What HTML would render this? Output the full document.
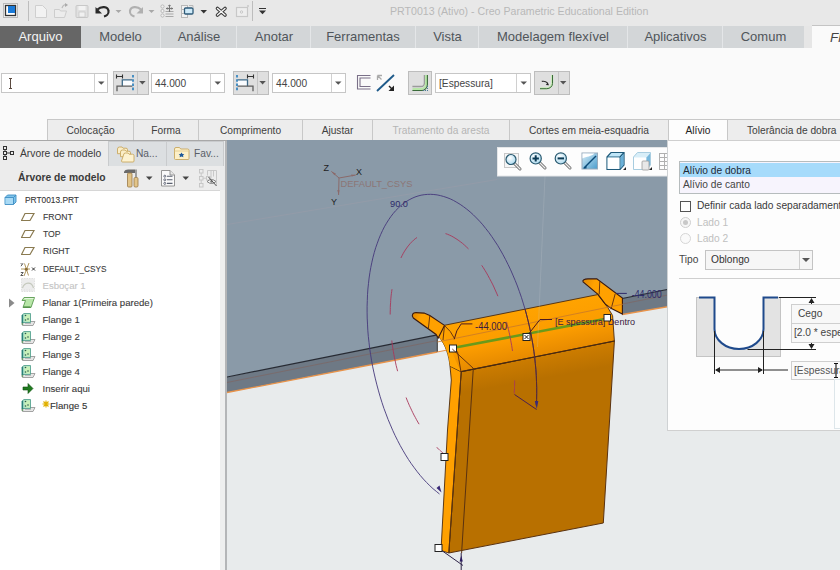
<!DOCTYPE html>
<html><head><meta charset="utf-8">
<style>
*{margin:0;padding:0;box-sizing:border-box}
html,body{width:840px;height:570px;overflow:hidden;background:#e8ebec;font-family:"Liberation Sans",sans-serif;color:#3c3c3c}
.a{position:absolute}
#title{left:0;top:0;width:840px;height:26px;background:#e8e8e8}
#tabs{left:0;top:26px;width:840px;height:22px;background:#d3d6d8}
.tab{position:absolute;top:0;height:22px;font-size:13px;line-height:22px;text-align:center;color:#50555a;border-left:1px solid #e4e6e8}
#ribbon{left:0;top:48px;width:840px;height:92px;background:#fafafa}
.combo{position:absolute;height:19px;background:#fff;border:1px solid #c6c6c6;font-size:10.2px;line-height:20px;padding-left:3px;color:#444}
.combo .dd{position:absolute;right:0;top:0;width:13px;height:17px;border-left:1px solid #d0d0d0}
.tri{position:absolute;width:0;height:0;border-left:4px solid transparent;border-right:4px solid transparent;border-top:4px solid #555}
.btn{position:absolute;height:23px;background:#dfdfdf;border:1px solid #bdbdbd}
.btn .dv{position:absolute;top:0;height:21px;border-left:1px solid #c4c4c4}
.stab{position:absolute;top:119px;height:21px;background:#ededed;border:1px solid #c8c8c8;border-bottom:none;font-size:10.2px;line-height:21.5px;text-align:center;color:#404040}
#left{left:0;top:140px;width:226px;height:430px;background:#e6e8e9}
.ti{position:absolute;font-size:9.6px;line-height:12px;color:#333;white-space:nowrap;-webkit-text-stroke:.1px currentColor}
#vp{left:227px;top:140px;width:613px;height:430px;background:#e8ebec;overflow:hidden}
#panel{left:668px;top:140px;width:172px;height:291px;background:#fdfdfd;border-left:1px solid #d4d4d4;border-bottom:1px solid #cfcfcf}
.pt{position:absolute;font-size:10.2px;line-height:12px;white-space:nowrap;color:#3a3a3a}
</style></head><body>
<!-- title bar -->
<div id="title" class="a">
<svg class="a" style="left:0;top:0" width="280" height="26" viewBox="0 0 280 26">
  <rect x="3.5" y="3.5" width="14" height="14" fill="#f4f4f4" stroke="#bbb"/>
  <rect x="5.5" y="5.5" width="10" height="10" fill="#fff" stroke="#333" stroke-width="1.3"/>
  <rect x="8" y="6" width="7" height="7" fill="#1a7ad8"/>
  <line x1="28.5" y1="1" x2="28.5" y2="21" stroke="#bdbdbd"/>
  <path d="M35.5 5.5h7l4 4v8h-11z" fill="#f2f2f2" stroke="#cfcfcf"/>
  <path d="M54.5 9.5h5l1 1.5h6l-2 6.5h-10z" fill="#ececec" stroke="#cdcdcd"/><path d="M62 8c1-3 3-4 5-3" stroke="#bbb" fill="none" stroke-width="1.2"/><path d="M65 3l3 2-3 2z" fill="#aaa"/>
  <rect x="76" y="5.5" width="12" height="12" rx="1" fill="#e0e0e0" stroke="#c8c8c8"/><rect x="78.5" y="6" width="7" height="4" fill="#f2f2f2"/><rect x="79" y="12" width="6" height="5" fill="#f0f0f0" stroke="#c0c0c0" stroke-width=".6"/>
  <path d="M97.5 9.5 C101 6 108 6 108.5 11 C109 14 106 16 104 16.5" stroke="#2a2a2a" stroke-width="2.2" fill="none"/><path d="M95.5 7v6.5h6.5z" fill="#2a2a2a"/>
  <path d="M115.5 10h6l-3 3z" fill="#a8a8a8"/>
  <path d="M141 9.5 C137.5 6 130.5 6 130 11 C129.5 14 132.5 16 134.5 16.5" stroke="#b0b0b0" stroke-width="2.2" fill="none"/><path d="M143 7v6.5h-6.5z" fill="#b0b0b0"/>
  <path d="M148.5 10h6l-3 3z" fill="#a8a8a8"/>
  <g fill="#f0f0f0" stroke="#b4b4b4" stroke-width=".9"><circle cx="162.5" cy="6.5" r="1.6"/><circle cx="162.5" cy="11" r="1.6"/><circle cx="162.5" cy="15.5" r="1.6"/></g>
  <path d="M165.5 11.5h8M165.5 14h8M165.5 16.5h8" stroke="#a8a8a8" stroke-width="1.1"/>
  <path d="M166 8.5h7M169.5 5v7" stroke="#777" stroke-width="1.2"/><path d="M166 8.5l1.6-1.6v3.2zM173 8.5l-1.6-1.6v3.2zM169.5 4.5l-1.6 1.6h3.2z" fill="#777"/>
  <rect x="181.5" y="5.5" width="6" height="4" fill="#f2f2f2" stroke="#b8b8b8"/><rect x="181.5" y="9.5" width="5" height="4" fill="#f2f2f2" stroke="#b8b8b8"/><rect x="181.5" y="13.5" width="6" height="4" fill="#f2f2f2" stroke="#b8b8b8"/>
  <rect x="184.5" y="8" width="8.5" height="6" rx="1" fill="#cfeaf8" stroke="#2e5a78" stroke-width="1.3"/>
  <path d="M189 5.5h4v2.5" fill="none" stroke="#b8b8b8"/>
  <path d="M200.5 10h6.5l-3.25 3.5z" fill="#333"/>
  <path d="M217.5 8.5l7.5 6.5M225 8.5l-7.5 6.5" stroke="#3a3a3a" stroke-width="3.6" stroke-linecap="round"/><path d="M217.5 8.5l7.5 6.5M225 8.5l-7.5 6.5" stroke="#f8f8f8" stroke-width="1.4" stroke-linecap="round"/>
  <rect x="236.5" y="7.5" width="11" height="9" fill="#eee" stroke="#c8c8c8" stroke-width="1.2"/><circle cx="241.5" cy="12" r="1.2" fill="none" stroke="#c8c8c8"/><circle cx="248" cy="6" r="1" fill="#c8c8c8"/>
  <line x1="252.5" y1="1" x2="252.5" y2="21" stroke="#bdbdbd"/>
  <path d="M259 8.5h7" stroke="#333" stroke-width="1"/><path d="M259 10.5h7l-3.5 3.8z" fill="#333"/>
</svg>
<div class="a" style="left:390px;top:5px;font-size:10.6px;line-height:13px;color:#b8b8b8;white-space:nowrap">PRT0013 (Ativo) - Creo Parametric Educational Edition</div>

</div>
<!-- tabs -->
<div id="tabs" class="a">
  <div class="tab" style="left:0;width:81px;background:#666;color:#f4f4f4;border:none">Arquivo</div>
  <div class="tab" style="left:81px;width:79px;border:none">Modelo</div>
  <div class="tab" style="left:160px;width:77px">Análise</div>
  <div class="tab" style="left:236px;width:75px">Anotar</div>
  <div class="tab" style="left:310px;width:105px">Ferramentas</div>
  <div class="tab" style="left:415px;width:64px">Vista</div>
  <div class="tab" style="left:478px;width:149px">Modelagem flexível</div>
  <div class="tab" style="left:627px;width:96px">Aplicativos</div>
  <div class="tab" style="left:722px;width:82px">Comum</div>
  <div class="a" style="left:804px;top:0;width:8px;height:22px;background:#e6e6e6"></div>
  <div class="a" style="left:812px;top:-1px;width:40px;height:24px;background:#fafafa;border-top:1px solid #c4c4c4;font-size:13.5px;font-style:italic;line-height:23px;padding-left:18px;color:#444;overflow:hidden;white-space:nowrap">Fla</div>
</div>
<!-- ribbon -->
<div id="ribbon" class="a"></div>
<!-- ribbon controls -->
<div class="combo" style="left:1px;top:73px;width:107px;height:20px"><div class="dd" style="width:13px;height:18px"></div></div>
<div class="btn" style="left:113px;top:71px;width:36px;height:24px"><div class="dv" style="left:23px;height:22px"></div></div>
<div class="combo" style="left:151px;top:73px;width:74px;height:20px">44.000<div class="dd" style="width:14px;height:18px"></div></div>
<div class="btn" style="left:233px;top:71px;width:36px;height:24px"><div class="dv" style="left:23px;height:22px"></div></div>
<div class="combo" style="left:272px;top:73px;width:74px;height:20px">44.000<div class="dd" style="width:14px;height:18px"></div></div>
<div class="btn" style="left:408px;top:71px;width:24px;height:24px"></div>
<div class="combo" style="left:435px;top:73px;width:96px;height:20px">[Espessura]<div class="dd" style="width:14px;height:18px"></div></div>
<div class="btn" style="left:534px;top:71px;width:36px;height:24px"><div class="dv" style="left:23px;height:22px"></div></div>
<svg class="a" style="left:0;top:60px" width="600" height="40" viewBox="0 60 600 40">
  <g fill="#555"><path d="M98 81.5h6.5l-3.25 3.3z"/><path d="M139.2 81h6.4l-3.2 3.6z"/><path d="M214.5 81.5h6.5l-3.25 3.3z"/><path d="M259.4 81h6.4l-3.2 3.6z"/><path d="M335 81.5h6.5l-3.25 3.3z"/><path d="M520.5 81.5h6.5l-3.25 3.3z"/><path d="M560 81h6.4l-3.2 3.6z"/></g>
  <path d="M9 78.5h3M9 88.5h3M10.5 78.5v10" stroke="#5a4a40" stroke-width="1"/>
  <!-- btn1 icon -->
  <path d="M116.5 74.5v4M122.5 74.5v4M117 76.5h5" stroke="#333" stroke-width="1.1" fill="none"/>
  <rect x="122.3" y="79.8" width="10" height="6.4" fill="#fafcff"/>
  <path d="M132.3 79.8h-10v6.4" stroke="#3e6a88" stroke-width="1.3" fill="none"/>
  <path d="M117 91.3v-5.1h15.3" stroke="#5e5e5e" stroke-width="1.3" fill="none"/>
  <path d="M133 75v16" stroke="#3a88c0" stroke-width="1.8" stroke-dasharray="2.6 1.6" fill="none"/>
  <!-- btn2 icon -->
  <path d="M247.5 74.5v4M253.5 74.5v4M248 76.5h5" stroke="#333" stroke-width="1.1" fill="none"/>
  <rect x="237.5" y="79.8" width="10" height="6.4" fill="#fafcff"/>
  <path d="M237.5 79.8h10v6.4" stroke="#3e6a88" stroke-width="1.3" fill="none"/>
  <path d="M253 91.3v-5.1h-15.5" stroke="#5e5e5e" stroke-width="1.3" fill="none"/>
  <path d="M237 75v16" stroke="#3a88c0" stroke-width="1.8" stroke-dasharray="2.6 1.6" fill="none"/>
  <!-- cut icon -->
  <path d="M370.5 75.5h-13v13.5h13M370.5 78h-10.5v8.5h10.5" stroke="#7a7088" stroke-width="1.1" fill="none"/>
  <path d="M377 91l17-16" stroke="#1e5a8a" stroke-width="1.8"/>
  <path d="M377.5 75.5v4.5M377.5 75.5h4.5M377.5 75.5l4 4" stroke="#aaa" stroke-width="1.3" fill="none"/>
  <path d="M394 91h-5.5l5.5-5.5z" fill="#222"/><path d="M393 90l-4-4" stroke="#222" stroke-width="1.4"/>
  <!-- btn3 icon -->
  <path d="M424.4 75v8c0 2-1.5 3.5-3.5 3.5h-8.5" stroke="#9a9a9a" stroke-width="1.3" fill="none"/>
  <path d="M426 75v9c0 3-2.5 5-5 5h-8.5" stroke="#b8e6a8" stroke-width="2" fill="none"/>
  <path d="M427.4 75v9.5c0 3.5-3 6-6 6h-9" stroke="#3a6a3a" stroke-width="1.1" fill="none"/>
  <path d="M427.5 86v5M423 90.5h4.5" stroke="#4a7a9a" stroke-width="1" stroke-dasharray="1 1"/>
  <!-- btn4 icon -->
  <path d="M552.2 75v8c0 3-2.5 5.3-5.5 5.3h-6.6" stroke="#c8ecb8" stroke-width="2.2" fill="none"/>
  <path d="M552.5 75v8.5c0 3-2.7 5.2-5.7 5.2h-6.8" stroke="#3a6a3a" stroke-width="1" fill="none"/>
  <path d="M541.8 81.4c2.5-.5 4.5.3 6 2" stroke="#333" stroke-width="1.2" fill="none"/>
  <path d="M549 85.2l-3.2-.3 2-2.4z" fill="#222"/>
</svg>

<!-- sub tabs -->
<div class="stab" style="left:47px;width:87px">Colocação</div>
<div class="stab" style="left:133px;width:66px">Forma</div>
<div class="stab" style="left:198px;width:105px">Comprimento</div>
<div class="stab" style="left:302px;width:71px">Ajustar</div>
<div class="stab" style="left:372px;width:138px;color:#b5b5b5">Tratamento da aresta</div>
<div class="stab" style="left:509px;width:160px">Cortes em meia-esquadria</div>
<div class="stab" style="left:668px;width:60px;background:#fdfdfd;color:#222">Alívio</div>
<div class="stab" style="left:727px;width:120px;text-align:left;padding-left:19px">Tolerância de dobra</div>
<!-- left panel -->
<!-- left panel -->
<div class="a" style="left:0;top:140px;width:226px;height:430px;background:#e9eaeb"></div>
<div class="a" style="left:108px;top:141px;width:59px;height:25px;background:#dcdfe1;border:1px solid #c9cbcd;border-bottom:none"></div>
<div class="a" style="left:166px;top:141px;width:58px;height:25px;background:#dcdfe1;border:1px solid #c9cbcd;border-bottom:none"></div>
<div class="a" style="left:0;top:166px;width:220px;height:24px;background:#ececec"></div>
<div class="a" style="left:0;top:140px;width:108px;height:26px;background:#ececec"></div>
<svg class="a" style="left:2px;top:145px" width="14" height="16" viewBox="0 0 14 16">
  <g fill="none" stroke="#333" stroke-width="1"><rect x="1.5" y="1.5" width="3" height="3"/><rect x="1.5" y="6.5" width="3" height="3"/><rect x="1.5" y="11.5" width="3" height="3"/><rect x="8.5" y="6.5" width="3" height="3"/><path d="M3 4.5v2M3 9.5v2M4.5 8h4"/></g>
</svg>
<div class="a" style="left:20px;top:148px;font-size:10.3px;line-height:12px;color:#3a3a3a;white-space:nowrap">Árvore de modelo</div>
<svg class="a" style="left:116px;top:145px" width="20" height="18" viewBox="0 0 20 18">
  <g stroke="#c8a860" stroke-width=".9"><path d="M1.5 4 q0-2 2-2 h2.5 l1 1.2 h3 q1.5 0 1.5 1.5 v4 h-10z" fill="#fbeec8"/><path d="M4.5 7 q0-2 2-2 h2.5 l1 1.2 h3 q1.5 0 1.5 1.5 v4 h-10z" fill="#fbeec8"/><path d="M7.5 10 q0-2 2-2 h2.5 l1 1.2 h3.5 q1.5 0 1.5 1.5 v5.3 q0 1 -1 1 h-10.5 q-1 0 -1-1z" fill="#fdf2d0"/></g>
</svg>
<div class="a" style="left:136px;top:148px;font-size:10.2px;line-height:12px;color:#5a6068;white-space:nowrap">Na...</div>
<svg class="a" style="left:173px;top:146px" width="17" height="15" viewBox="0 0 17 15">
  <path d="M1.5 3 q0-1.5 1.5-1.5 h3.5 l1.2 1.5 h6.8 q1.5 0 1.5 1.5 v8 q0 1-1 1 h-12.5 q-1 0-1-1z" fill="#fdf0c8" stroke="#c8a860" stroke-width=".9"/><path d="M1.5 5h14" stroke="#e0c888" stroke-width=".8"/><path d="M8.5 6.5l1 1.6 1.8.2-1.3 1.2.4 1.8-1.9-.9-1.9.9.4-1.8-1.3-1.2 1.8-.2z" fill="#1f5a9a"/>
</svg>
<div class="a" style="left:194px;top:148px;font-size:10.2px;line-height:12px;color:#5a6068;white-space:nowrap">Fav...</div>
<div class="a" style="left:18px;top:172px;font-size:10.3px;line-height:12px;font-weight:bold;color:#3a3a3a;white-space:nowrap">Árvore de modelo</div>
<svg class="a" style="left:115px;top:164px" width="110" height="26" viewBox="115 164 110 26">
  <path d="M124 171.5 q1-2 4-2 h7 v3.5 h-11z" fill="#6a6a6a"/>
  <rect x="127.5" y="173" width="4.5" height="14" rx="1" fill="#e2c488" stroke="#9a7a48" stroke-width=".8"/>
  <rect x="135.2" y="169.5" width="1.6" height="8.5" fill="#8a8a8a"/>
  <rect x="134" y="177.5" width="4" height="9.5" rx="1.2" fill="#e2c488" stroke="#9a7a48" stroke-width=".8"/>
  <path d="M146 176.5h6.5l-3.25 3.5z" fill="#444"/>
  <path d="M161.5 170.5h8.5l4.5 4.5v11h-13z" fill="#fafafa" stroke="#8a8a8a" stroke-width=".9"/><path d="M170 170.5v4.5h4.5" fill="#e8e8e8" stroke="#8a8a8a" stroke-width=".9"/>
  <g fill="none" stroke="#5a6070" stroke-width=".9"><circle cx="164.8" cy="176.2" r="1"/><circle cx="164.8" cy="179.8" r="1"/><circle cx="164.8" cy="183.4" r="1"/></g>
  <path d="M167 176.2h5.5M167 179.8h5.5M167 183.4h5.5" stroke="#5a6070" stroke-width="1.1"/>
  <path d="M182.5 176.5h6.5l-3.25 3.5z" fill="#444"/>
  <g fill="none" stroke="#c4c4c4" stroke-width=".9"><rect x="199.5" y="169.5" width="3.5" height="3.5"/><rect x="199.5" y="176.5" width="3.5" height="3.5"/><rect x="199.5" y="183.5" width="3.5" height="3.5"/><path d="M201.2 173v3.5M201.2 180v3.5M203 178.2h3.5"/><path d="M207.5 170.5h9v15M207.5 170.5v5M211 170.5v8M213.5 170.5v6"/></g>
  <rect x="206.5" y="176.5" width="3.5" height="3.5" fill="none" stroke="#c4c4c4" stroke-width=".9"/>
  <path d="M207 181.5q4.5-4 9 0q-4.5 4-9 0z" fill="#f4f4f4" stroke="#777" stroke-width=".9"/><circle cx="211.5" cy="181.5" r="1.2" fill="#777"/><path d="M208.5 177l8 9" stroke="#555" stroke-width="1"/>
</svg>
<div class="a" style="left:0;top:190px;width:220px;height:380px;background:#fff;border-top:1px solid #d6d6d6"></div>
<div class="a" style="left:220px;top:190px;width:5px;height:380px;background:#eeefef"></div>
<div class="a" style="left:225px;top:140px;width:2px;height:430px;background:#b4b6b8"></div>
<svg class="a" style="left:4px;top:194px" width="13" height="11" viewBox="0 0 13 11">
  <path d="M1 3.5l2.5-2.5h8.5v7l-2.5 2.5h-8.5z" fill="#7ec3ea" stroke="#3f8fc4" stroke-width=".9"/><path d="M1 3.5h8.5v7M9.5 3.5l2.5-2.5" fill="none" stroke="#3f8fc4" stroke-width=".9"/><rect x="1.5" y="4" width="7.5" height="6" fill="#a9daf5"/>
</svg>
<div class="ti" style="left:25px;top:193.5px;transform:scaleX(.87);transform-origin:0 0">PRT0013.PRT</div>
<svg class="a" style="left:21px;top:212px" width="14" height="10" viewBox="0 0 14 10"><path d="M4 1.5h9l-4 7h-8.5z" fill="none" stroke="#8a7a50" stroke-width="1.2"/></svg>
<div class="ti" style="left:42.5px;top:211px;letter-spacing:0;transform:scaleX(.9);transform-origin:0 0;color:#3a3a3a">FRONT</div>
<svg class="a" style="left:21px;top:229px" width="14" height="10" viewBox="0 0 14 10"><path d="M4 1.5h9l-4 7h-8.5z" fill="none" stroke="#8a7a50" stroke-width="1.2"/></svg>
<div class="ti" style="left:42.5px;top:228px;letter-spacing:0;transform:scaleX(.9);transform-origin:0 0;color:#3a3a3a">TOP</div>
<svg class="a" style="left:21px;top:246px" width="14" height="10" viewBox="0 0 14 10"><path d="M4 1.5h9l-4 7h-8.5z" fill="none" stroke="#8a7a50" stroke-width="1.2"/></svg>
<div class="ti" style="left:42.5px;top:245px;letter-spacing:0;transform:scaleX(.9);transform-origin:0 0;color:#3a3a3a">RIGHT</div>
<svg class="a" style="left:20px;top:262px" width="16" height="15" viewBox="0 0 16 15"><path d="M9 1L4 14M4.5 1.5L8.5 13.5M1 7h9" stroke="#b09860" stroke-width="1"/><circle cx="6.3" cy="7.2" r="1.5" fill="#8a6a30"/><path d="M.8 1.2l1.2 1.3M3 1.2l-2 3M.8 10.5h2.4l-2.4 3h2.4" stroke="#333" stroke-width=".8" fill="none"/><path d="M12 5.5l3 3M15 5.5l-3 3" stroke="#333" stroke-width="1"/></svg>
<div class="ti" style="left:42.5px;top:262.5px;letter-spacing:0;transform:scaleX(.86);transform-origin:0 0;color:#3a3a3a">DEFAULT_CSYS</div>
<svg class="a" style="left:21px;top:278px" width="14" height="14" viewBox="0 0 14 14"><rect x=".5" y=".5" width="13" height="13" fill="#ececec" stroke="#e0e0e0" stroke-dasharray="1.5 1"/><path d="M1.5 10c2-6 9-7 11 0" fill="none" stroke="#c4c8bc" stroke-width="1.1"/><path d="M3 12h8" stroke="#ddd" stroke-dasharray="1 1.5"/></svg>
<div class="ti" style="left:42.5px;top:279.5px;letter-spacing:0;color:#c4c4c4">Esboçar 1</div>
<svg class="a" style="left:9px;top:298px" width="6" height="10" viewBox="0 0 6 10"><path d="M0 .5 L5.5 5 L0 9.5z" fill="#8a8a8a"/></svg>
<svg class="a" style="left:21px;top:296px" width="15" height="13" viewBox="0 0 15 13"><path d="M1 4.5 L3 1.5 H13.5 L10 11.5 H2 L4.5 4.5 Z" fill="#b8e6a8" stroke="#5a9a50" stroke-width=".9"/><path d="M3.5 2.5h9" stroke="#e4f6dc" stroke-width="1"/><path d="M2.5 11h7" stroke="#4a8a40" stroke-width="1.2"/></svg>
<div class="ti" style="left:42.5px;top:296.5px;letter-spacing:0;color:#3a3a3a">Planar 1(Primeira parede)</div>
<svg class="a" style="left:21px;top:312px" width="15" height="15" viewBox="0 0 15 15"><path d="M1 11.5 L1.5 9.5 H14 L12 13.5 H1.5z" fill="#e6e6e6" stroke="#9a9a9a" stroke-width=".9"/><path d="M1.5 10 V13" stroke="#6a9a6a" stroke-width="1.4"/><path d="M1 3 L3 1.5 H9.5 V10.5 H1z" fill="#a8e0c8" stroke="#4a9a88" stroke-width=".8"/><rect x="3.5" y="2.5" width="5.5" height="7" fill="#c8f0b8"/><path d="M1.5 3v8" stroke="#2a8078" stroke-width="1.3"/><circle cx="4.5" cy="3.5" r=".8" fill="#2a5a50"/><circle cx="4.5" cy="8" r=".8" fill="#2a5a50"/><circle cx="7" cy="7" r=".8" fill="#2a5a50"/><path d="M4 11.5h6" stroke="#bbb" stroke-width="1"/></svg>
<div class="ti" style="left:42.5px;top:314px;letter-spacing:0;color:#3a3a3a">Flange 1</div>
<svg class="a" style="left:21px;top:330px" width="15" height="15" viewBox="0 0 15 15"><path d="M1 11.5 L1.5 9.5 H14 L12 13.5 H1.5z" fill="#e6e6e6" stroke="#9a9a9a" stroke-width=".9"/><path d="M1.5 10 V13" stroke="#6a9a6a" stroke-width="1.4"/><path d="M1 3 L3 1.5 H9.5 V10.5 H1z" fill="#a8e0c8" stroke="#4a9a88" stroke-width=".8"/><rect x="3.5" y="2.5" width="5.5" height="7" fill="#c8f0b8"/><path d="M1.5 3v8" stroke="#2a8078" stroke-width="1.3"/><circle cx="4.5" cy="3.5" r=".8" fill="#2a5a50"/><circle cx="4.5" cy="8" r=".8" fill="#2a5a50"/><circle cx="7" cy="7" r=".8" fill="#2a5a50"/><path d="M4 11.5h6" stroke="#bbb" stroke-width="1"/></svg>
<div class="ti" style="left:42.5px;top:331.2px;letter-spacing:0;color:#3a3a3a">Flange 2</div>
<svg class="a" style="left:21px;top:347px" width="15" height="15" viewBox="0 0 15 15"><path d="M1 11.5 L1.5 9.5 H14 L12 13.5 H1.5z" fill="#e6e6e6" stroke="#9a9a9a" stroke-width=".9"/><path d="M1.5 10 V13" stroke="#6a9a6a" stroke-width="1.4"/><path d="M1 3 L3 1.5 H9.5 V10.5 H1z" fill="#a8e0c8" stroke="#4a9a88" stroke-width=".8"/><rect x="3.5" y="2.5" width="5.5" height="7" fill="#c8f0b8"/><path d="M1.5 3v8" stroke="#2a8078" stroke-width="1.3"/><circle cx="4.5" cy="3.5" r=".8" fill="#2a5a50"/><circle cx="4.5" cy="8" r=".8" fill="#2a5a50"/><circle cx="7" cy="7" r=".8" fill="#2a5a50"/><path d="M4 11.5h6" stroke="#bbb" stroke-width="1"/></svg>
<div class="ti" style="left:42.5px;top:348.5px;letter-spacing:0;color:#3a3a3a">Flange 3</div>
<svg class="a" style="left:21px;top:364px" width="15" height="15" viewBox="0 0 15 15"><path d="M1 11.5 L1.5 9.5 H14 L12 13.5 H1.5z" fill="#e6e6e6" stroke="#9a9a9a" stroke-width=".9"/><path d="M1.5 10 V13" stroke="#6a9a6a" stroke-width="1.4"/><path d="M1 3 L3 1.5 H9.5 V10.5 H1z" fill="#a8e0c8" stroke="#4a9a88" stroke-width=".8"/><rect x="3.5" y="2.5" width="5.5" height="7" fill="#c8f0b8"/><path d="M1.5 3v8" stroke="#2a8078" stroke-width="1.3"/><circle cx="4.5" cy="3.5" r=".8" fill="#2a5a50"/><circle cx="4.5" cy="8" r=".8" fill="#2a5a50"/><circle cx="7" cy="7" r=".8" fill="#2a5a50"/><path d="M4 11.5h6" stroke="#bbb" stroke-width="1"/></svg>
<div class="ti" style="left:42.5px;top:365.5px;letter-spacing:0;color:#3a3a3a">Flange 4</div>
<svg class="a" style="left:22px;top:383px" width="12" height="11" viewBox="0 0 12 11"><path d="M1 4h5v-3.5l5 5-5 5v-3.5h-5z" fill="#1f7a1f" stroke="#0d4d0d" stroke-width=".6"/></svg>
<div class="ti" style="left:42.5px;top:382.6px;letter-spacing:0;color:#3a3a3a">Inserir aqui</div>
<svg class="a" style="left:21px;top:398px" width="15" height="15" viewBox="0 0 15 15"><path d="M1 11.5 L1.5 9.5 H14 L12 13.5 H1.5z" fill="#e6e6e6" stroke="#9a9a9a" stroke-width=".9"/><path d="M1.5 10 V13" stroke="#6a9a6a" stroke-width="1.4"/><path d="M1 3 L3 1.5 H9.5 V10.5 H1z" fill="#a8e0c8" stroke="#4a9a88" stroke-width=".8"/><rect x="3.5" y="2.5" width="5.5" height="7" fill="#c8f0b8"/><path d="M1.5 3v8" stroke="#2a8078" stroke-width="1.3"/><circle cx="4.5" cy="3.5" r=".8" fill="#2a5a50"/><circle cx="4.5" cy="8" r=".8" fill="#2a5a50"/><circle cx="7" cy="7" r=".8" fill="#2a5a50"/><path d="M4 11.5h6" stroke="#bbb" stroke-width="1"/></svg>
<svg class="a" style="left:42px;top:400px" width="8" height="8" viewBox="0 0 8 8"><path d="M4 .5v7M.5 4h7M1.5 1.5l5 5M6.5 1.5l-5 5" stroke="#e0b000" stroke-width="1.1"/></svg>
<div class="ti" style="left:50px;top:400px">Flange 5</div>

<div class="a" style="left:0;top:139.5px;width:668px;height:1.5px;background:#a8a8a8"></div>
<!--PANELLINE-->
<!-- viewport -->
<svg class="a" style="left:227px;top:140px" width="613" height="430" viewBox="227 140 613 430">
<defs>
<linearGradient id="strip" gradientUnits="userSpaceOnUse" x1="530" y1="308" x2="540" y2="358"><stop offset="0" stop-color="#ffa300"/><stop offset=".55" stop-color="#fb9c00"/><stop offset="1" stop-color="#e48800"/></linearGradient>
<linearGradient id="face" gradientUnits="userSpaceOnUse" x1="530" y1="358" x2="534" y2="380"><stop offset="0" stop-color="#cc7c00"/><stop offset="1" stop-color="#b87000"/></linearGradient>
<linearGradient id="earL" x1="0" y1="0" x2="1" y2="0.3"><stop offset="0" stop-color="#e08600"/><stop offset=".3" stop-color="#ffa200"/><stop offset="1" stop-color="#ffa000"/></linearGradient>
</defs>
<rect x="227" y="140" width="613" height="430" fill="#e8ebec"/>
<polygon points="227,140 840,140 840,255 622.3,298.5 444.3,325.3 437.3,334.8 227,377" fill="#8a9aa8"/>
<polygon points="227,377 437.3,334.8 437.3,352 227,392.5" fill="#6e7985"/>
<polygon points="622.3,298.5 840,255 840,277 622.3,314.5" fill="#6e7985"/>
<path d="M227 382.5 L437.3 340.5 M622.3 304 L840 261" stroke="#7a6a6a" stroke-width=".9" fill="none"/>
<path d="M227 377 L437.3 334.8 M622.3 298.5 L840 255" stroke="#262a33" stroke-width="1.2" fill="none"/>
<path d="M227 392.5 L437.3 352 M622.3 314.5 L840 277" stroke="#e8934a" stroke-width="1.3" fill="none"/>
<polygon points="437.3,335.5 439.5,338 445,343 448.5,349.8 437.3,352" fill="#f7f8f9"/>
<line x1="437.3" y1="334.8" x2="437.3" y2="352" stroke="#333" stroke-width="1"/>
<path d="M437.3 352 L448.5 349.8" stroke="#e8934a" stroke-width="1.1"/>
<!-- flange main face -->
<polygon points="461.2,371.6 614.4,341 603.3,523 448.8,553" fill="url(#face)" stroke="#5a3210" stroke-width="1"/>
<!-- bright strip + side -->
<path d="M461.2 371.6 L448.8 553 L441 550.5 L447.5 430 L451.3 380 L450 366 Z" fill="#ffa000" stroke="#4a2a10" stroke-width=".9"/>
<path d="M444.3 325.3 L597.7 294.6 L607.4 306.8 L612.6 315.6 L614.4 341 L461.2 371.6 L450 366 C449 356 446 345 438.7 336.5 Z" fill="url(#strip)" stroke="#4a2a10" stroke-width=".9"/>
<path d="M450 366 C449 356 446 345 438.7 336.5 L444.3 325.3 L446 340 C452 350 455 360 461.2 371.6 Z" fill="#ffa300"/>
<!-- ears -->
<path d="M413.3 318 C411 315 413 312.5 416 312.6 L424.1 313.1 L429.8 315.5 L444.5 325.4 L438.2 338 L436.1 334.5 Z" fill="url(#earL)" stroke="#3a1a10" stroke-width="1.1"/>
<path d="M583.1 282 C582 280 584.5 278.9 588 278.9 L596.8 278.9 L622.4 298 L622.4 314 L610.5 308 L605.7 304.5 L598 294.4 Z" fill="url(#earL)" stroke="#3a1a10" stroke-width="1.1"/>
<path d="M429.8 315.5 L428.4 328.2 M444.5 325.4 L443 340 M599.8 281.3 L599.2 294.4 M615.2 293.8 L611 309.3" stroke="#5a2a10" stroke-width=".9" fill="none"/>
<!-- lines on flange -->
<path d="M437.3 342 L623 304.2" stroke="#c8782a" stroke-width=".8" fill="none"/>
<path d="M461.2 371.6 L614.4 341" stroke="#4a2a10" stroke-width="1.1" fill="none"/>
<path d="M473.3 368.3 L461.6 553" stroke="#5a3210" stroke-width="1" fill="none"/>
<path d="M461.2 371.6 L448.8 553" stroke="#5a3210" stroke-width=".9" fill="none"/>
<path d="M456.7 347.3 L603.3 319.3" stroke="#6a9a1a" stroke-width="2.6" fill="none"/>
<!-- arcs -->
<path d="M536.3 405.2 L536.6 399.5 L536.7 393.6 L536.7 387.7 L536.5 381.7 L536.3 375.7 L535.9 369.7 L535.3 363.6 L534.7 357.5 L533.9 351.3 L533.0 345.2 L531.9 339.1 L530.8 333.0 L529.5 326.9 L528.1 320.9 L526.6 314.9 L525.0 309.0 L523.2 303.1 L521.4 297.3 L519.4 291.6 L517.4 286.0 L515.2 280.5 L512.9 275.1 L510.6 269.8 L508.1 264.6 L505.6 259.6 L503.0 254.7 L500.3 249.9 L497.6 245.3 L494.7 240.9 L491.8 236.6 L488.9 232.5 L485.8 228.6 L482.8 224.8 L479.7 221.3 L476.5 218.0 L473.3 214.8 L470.1 211.9 L466.8 209.2 L463.5 206.7 L460.2 204.4 L456.9 202.4 L453.6 200.5 L450.3 198.9 L447.0 197.6 L443.7 196.5 L440.4 195.6 L437.1 194.9 L433.8 194.5 L430.6 194.3 L427.4 194.4 L424.2 194.7 L421.1 195.2 L418.0 196.0 L415.0 197.0 L412.1 198.3 L409.2 199.8 L406.3 201.5 L403.6 203.4 L400.9 205.6 L398.3 208.0 L395.7 210.6 L393.3 213.4 L390.9 216.5 L388.7 219.7 L386.5 223.2 L384.4 226.8 L382.5 230.6 L380.6 234.7 L378.9 238.8 L377.3 243.2 L375.7 247.7 L374.3 252.4 L373.0 257.3 L371.9 262.2 L370.8 267.4 L369.9 272.6 L369.1 278.0 L368.5 283.4 L367.9 289.0 L367.5 294.7 L367.3 300.4 L367.1 306.3 L367.1 312.2 L367.2 318.1 L367.5 324.1 L367.8 330.2 L368.3 336.3 L369.0 342.4 L369.7 348.5 L370.6 354.6 L371.6 360.7 L372.7 366.8 L374.0 372.9 L375.4 378.9 L376.9 384.9 L378.5 390.9 L380.2 396.8 L382.0 402.6 L383.9 408.3 L386.0 413.9 L388.1 419.5 L390.4 424.9 L392.7 430.3 L395.1 435.5 L397.6 440.5 L400.2 445.5 L402.9 450.3 L405.6 454.9 L408.4 459.4 L411.3 463.7 L414.3 467.8 L417.3 471.8 L420.3 475.5 L423.4 479.1 L426.6 482.5 L429.8 485.7 L433.0 488.7 L436.3 491.4 L439.5 494.0" stroke="#45387a" stroke-width=".9" fill="none"/>
<clipPath id="fl"><path d="M444.3 325.3 L597.7 294.6 L614.4 341 L603.3 523 L448.8 553 L461.2 371.6 Z"/></clipPath>
<path d="M536.3 405.2 L536.6 399.5 L536.7 393.6 L536.7 387.7 L536.5 381.7 L536.3 375.7 L535.9 369.7 L535.3 363.6 L534.7 357.5 L533.9 351.3 L533.0 345.2 L531.9 339.1 L530.8 333.0 L529.5 326.9 L528.1 320.9 L526.6 314.9 L525.0 309.0 L523.2 303.1 L521.4 297.3 L519.4 291.6 L517.4 286.0 L515.2 280.5 L512.9 275.1 L510.6 269.8 L508.1 264.6 L505.6 259.6 L503.0 254.7 L500.3 249.9 L497.6 245.3 L494.7 240.9 L491.8 236.6 L488.9 232.5 L485.8 228.6 L482.8 224.8 L479.7 221.3 L476.5 218.0 L473.3 214.8 L470.1 211.9 L466.8 209.2 L463.5 206.7 L460.2 204.4 L456.9 202.4 L453.6 200.5 L450.3 198.9 L447.0 197.6 L443.7 196.5 L440.4 195.6 L437.1 194.9 L433.8 194.5 L430.6 194.3 L427.4 194.4 L424.2 194.7 L421.1 195.2 L418.0 196.0 L415.0 197.0 L412.1 198.3 L409.2 199.8 L406.3 201.5 L403.6 203.4 L400.9 205.6 L398.3 208.0 L395.7 210.6 L393.3 213.4 L390.9 216.5 L388.7 219.7 L386.5 223.2 L384.4 226.8 L382.5 230.6 L380.6 234.7 L378.9 238.8 L377.3 243.2 L375.7 247.7 L374.3 252.4 L373.0 257.3 L371.9 262.2 L370.8 267.4 L369.9 272.6 L369.1 278.0 L368.5 283.4 L367.9 289.0 L367.5 294.7 L367.3 300.4 L367.1 306.3 L367.1 312.2 L367.2 318.1 L367.5 324.1 L367.8 330.2 L368.3 336.3 L369.0 342.4 L369.7 348.5 L370.6 354.6 L371.6 360.7 L372.7 366.8 L374.0 372.9 L375.4 378.9 L376.9 384.9 L378.5 390.9 L380.2 396.8 L382.0 402.6 L383.9 408.3 L386.0 413.9 L388.1 419.5 L390.4 424.9 L392.7 430.3 L395.1 435.5 L397.6 440.5 L400.2 445.5 L402.9 450.3 L405.6 454.9 L408.4 459.4 L411.3 463.7 L414.3 467.8 L417.3 471.8 L420.3 475.5 L423.4 479.1 L426.6 482.5 L429.8 485.7 L433.0 488.7 L436.3 491.4 L439.5 494.0" stroke="#5a2a30" stroke-width="1" fill="none" clip-path="url(#fl)"/>
<path d="M443.4 453.3 L442.8 452.8 L442.2 452.3 L441.5 451.7 L440.9 451.2 L440.3 450.7 L439.7 450.1 L439.1 449.5 L438.4 449.0 L437.8 448.4 L437.2 447.8 L436.6 447.2 M419.1 424.2 L417.8 422.0 L416.5 419.7 L415.3 417.4 L414.0 415.1 L412.8 412.7 L411.6 410.2 L410.5 407.8 L409.3 405.3 L408.2 402.7 L407.1 400.1 L406.1 397.5 M397.6 371.2 L396.9 368.4 L396.2 365.7 L395.6 362.9 L395.0 360.1 L394.4 357.3 L393.9 354.5 L393.4 351.7 L392.9 348.9 L392.5 346.1 L392.1 343.3 L391.8 340.5 M390.2 314.5 L390.2 312.1 L390.3 309.7 L390.3 307.4 L390.4 305.0 L390.6 302.7 L390.7 300.4 L390.9 298.1 L391.1 295.9 L391.4 293.6 L391.7 291.4 L392.0 289.2 M400.9 258.0 L402.1 255.6 L403.3 253.3 L404.6 251.1 L406.0 249.0 L407.4 247.0 L408.9 245.1 L410.4 243.3 L412.0 241.7 L413.6 240.1 L415.3 238.7 L417.0 237.5 M445.5 233.6 L447.6 234.3 L449.7 235.2 L451.8 236.2 L453.9 237.4 L456.0 238.7 L458.1 240.1 L460.2 241.6 L462.3 243.2 L464.4 245.0 L466.4 246.9 L468.5 248.9 M481.7 265.3 L483.3 267.7 L484.9 270.3 L486.5 272.9 L488.0 275.6 L489.5 278.4 L491.0 281.2 L492.5 284.1 L493.9 287.0 L495.2 290.0 L496.6 293.1 L497.9 296.2 M506.5 321.8 L507.2 324.4 L507.8 327.0 L508.5 329.6 L509.1 332.3 L509.7 334.9 L510.2 337.6 L510.7 340.3 L511.2 342.9 L511.7 345.6 L512.1 348.3 L512.5 351.0 M514.6 380.4 L514.6 381.6 L514.6 382.8 L514.6 384.0 L514.6 385.2 L514.5 386.4 L514.5 387.6 L514.5 388.8 L514.4 390.0 L514.3 391.1 L514.3 392.3 L514.2 393.5 " stroke="#a8385a" stroke-width=".9" fill="none"/>

<path d="M514.5 394.5 L536.6 409.5" stroke="#4a2050" stroke-width="1" fill="none"/>
<path d="M534.8 401 L536.8 409 L538.3 401 Z M436.5 488 L441.5 492.5 L439.5 485.5 Z" fill="#3a2a78"/>
<!-- csys -->
<path d="M227 224.5 L497 179.5" stroke="#a39ea8" stroke-width="1" opacity=".35" fill="none"/>
<path d="M545 176 L537.5 347" stroke="#c8ccd0" stroke-width="1" opacity=".22" fill="none"/>
<path d="M339 178 L331.4 171.4 M339 178 L355.7 175 M339 178 L338.6 195" stroke="#8b6a6a" stroke-width="1" fill="none"/>
<path d="M331.4 171.4 l4.5 2 -1.5 1.8z M355.7 175 l-4.6 -.6 .8 2z M338.6 195 l-1.3 -5 2.2 .2z" fill="#8b6a6a"/>
<text x="323.5" y="171" font-family="Liberation Sans" font-size="9" fill="#1e1e1e">Z</text>
<text x="356" y="174.5" font-family="Liberation Sans" font-size="9" fill="#1e1e1e">X</text>
<text x="331" y="204.5" font-family="Liberation Sans" font-size="9" fill="#1e1e1e">Y</text>
<text x="340.5" y="187" font-family="Liberation Sans" font-size="9.6" fill="#8c7676" textLength="72" lengthAdjust="spacingAndGlyphs">DEFAULT_CSYS</text>
<text x="390" y="206.5" font-family="Liberation Sans" font-size="9.5" fill="#2e2a6a" textLength="18" lengthAdjust="spacingAndGlyphs">90.0</text>
<!-- dimensions -->
<text x="475" y="329.5" font-family="Liberation Sans" font-size="10" fill="#3a1a40" textLength="32" lengthAdjust="spacingAndGlyphs">-44.000</text>
<path d="M472.4 323.9 L461.2 323.9 Q456 330 454.2 339.3" stroke="#4a1a20" stroke-width="1" fill="none"/>
<text x="555" y="325" font-family="Liberation Sans" font-size="9.5" fill="#3a1a40" textLength="80" lengthAdjust="spacingAndGlyphs">[E spessura] Dentro</text>
<path d="M552 319.5 L540 319.5 L527 336" stroke="#4a1a20" stroke-width="1" fill="none"/>
<text x="631.7" y="298" font-family="Liberation Sans" font-size="10" fill="#2e2a6a" textLength="30" lengthAdjust="spacingAndGlyphs">-44.000</text>
<path d="M616.3 293.4 L626.8 293.4" stroke="#2e2a6a" stroke-width="1" fill="none"/>
<!-- handles -->
<rect x="449.5" y="345" width="7" height="7" fill="#fff" stroke="#222" stroke-width="1"/>
<rect x="604" y="314.5" width="6.5" height="6.5" fill="#fff" stroke="#222" stroke-width="1"/>
<rect x="441" y="453.5" width="7" height="7" fill="#fff" stroke="#222" stroke-width="1"/>
<rect x="435" y="544.5" width="7" height="7" fill="#fff" stroke="#222" stroke-width="1"/>
<rect x="523" y="333.5" width="7" height="7" fill="#fff" stroke="#222" stroke-width="1"/>
<path d="M524.5 335 L528.5 339 M528.5 335 L524.5 339" stroke="#222" stroke-width="1"/>
<!-- bottom leader -->
<path d="M442 550.7 L463 565.5 M461.2 553 L461.2 570" stroke="#2e2448" stroke-width="1" fill="none"/>
<path d="M461.2 555.5 l-1.6 6 h3.2z" fill="#2a1a60"/>
<path d="M452.3 349 L473.3 368.3 M444.5 325.5 Q451 331 454.5 338.5 M457.5 351.5 L461 372" stroke="#5a2a10" stroke-width=".9" fill="none"/>
<!-- viewport toolbar -->
<rect x="497.5" y="147.5" width="180" height="28.5" fill="#fdfdfd" stroke="#e4e6e8"/>
<defs><radialGradient id="lens" cx=".4" cy=".35" r=".7"><stop offset="0" stop-color="#ffffff"/><stop offset="1" stop-color="#a8d8ee"/></radialGradient>
<linearGradient id="rep" x1="0" y1="0" x2="1" y2="1"><stop offset="0" stop-color="#d8eef8"/><stop offset="1" stop-color="#4a9ccc"/></linearGradient></defs>
<rect x="504.5" y="153.5" width="14" height="14" fill="#f6f6f6" stroke="#c8c8c8"/>
<path d="M514.5 163.5 L520 169" stroke="#666" stroke-width="3" stroke-linecap="round"/><path d="M514.5 163.5 L520 169" stroke="#eee" stroke-width="1.4" stroke-linecap="round"/>
<circle cx="511" cy="159.5" r="5" fill="url(#lens)" stroke="#2a5a70" stroke-width="1.2"/>
<path d="M539.5 162.5 L545 168" stroke="#666" stroke-width="3" stroke-linecap="round"/><path d="M539.5 162.5 L545 168" stroke="#eee" stroke-width="1.4" stroke-linecap="round"/>
<circle cx="535.7" cy="158.4" r="5.6" fill="url(#lens)" stroke="#2a5a70" stroke-width="1.2"/>
<path d="M532.5 158.4 h6.4 M535.7 155.2 v6.4" stroke="#0a3a55" stroke-width="2"/>
<path d="M564.5 162.5 L570 168" stroke="#666" stroke-width="3" stroke-linecap="round"/><path d="M564.5 162.5 L570 168" stroke="#eee" stroke-width="1.4" stroke-linecap="round"/>
<circle cx="560.8" cy="158.4" r="5.6" fill="url(#lens)" stroke="#2a5a70" stroke-width="1.2"/>
<path d="M557.6 158.4 h6.4" stroke="#0a3a55" stroke-width="2"/>
<rect x="582" y="153" width="15.5" height="16" fill="url(#rep)" stroke="#9ab"/>
<path d="M582.5 153.5 h12 c-3 3 -8 3 -12 5z" fill="#fff"/>
<path d="M584 168 L596 156" stroke="#0a4a78" stroke-width="1.5"/><path d="M583 168.5 l3.5 -3 0 3z" fill="#0a4a78"/>
<path d="M607 157 L611 152.5 H624 V165 L620 169.5 H607 Z" fill="#bfe6f8" stroke="#1f5a7a" stroke-width="1.2"/>
<path d="M607 157 H620 V169.5 M620 157 L624 152.5" fill="none" stroke="#1f5a7a" stroke-width="1.2"/>
<rect x="607.6" y="157.6" width="11.8" height="11.3" fill="#fff"/>
<path d="M620.6 157.5 L623.5 154 V165 L620.6 168.5z" fill="#6ab0d8"/>
<path d="M623 170 h3 v-3z" fill="#222"/>
<path d="M633.5 157 L637.5 152.5 H650.5 V165 L646.5 169.5 H633.5 Z" fill="#d8eef8" stroke="#a8cde0"/>
<rect x="634" y="157.5" width="12" height="11.5" fill="#fff"/><path d="M646.5 157.5 L650 153.5 V165 L646.5 169z" fill="#78b8dc"/>
<rect x="642" y="161" width="7" height="9" rx="1" fill="#e8e8e8" stroke="#999" stroke-width=".8"/>
<path d="M649 170 h3 v-3z" fill="#222"/>
<path d="M659.5 153.5 H670 M659.5 157.5 H670 M659.5 161.5 H670 M659.5 165.5 H670 M659.5 169.5 H670 M659.5 153 V170 M664.5 153 V170" stroke="#b0b0b0" stroke-width="1"/>
</svg>

<!-- right panel -->
<!-- right panel -->
<div class="a" style="left:667px;top:140px;width:173px;height:291px;background:#fdfdfd;border-left:1px solid #cfd2d4;border-bottom:1px solid #d0d0d0"></div>
<div class="a" style="left:668px;top:140px;width:172px;height:1px;background:#cfcfcf"></div>
<div class="a" style="left:679px;top:161px;width:170px;height:33px;background:#f7f4fd;border:1px solid #b6bcbd"></div>
<div class="a" style="left:680px;top:162.5px;width:160px;height:14.5px;background:#a6dbfb"></div>
<div class="pt" style="left:683px;top:164.5px;color:#1e2a36">Alívio de dobra</div>
<div class="pt" style="left:683px;top:179px;color:#444">Alívio de canto</div>
<div class="a" style="left:680px;top:201px;width:11px;height:11px;background:#fff;border:1px solid #555"></div>
<div class="pt" style="left:697px;top:200px">Definir cada lado separadamente</div>
<div class="a" style="left:680px;top:217px;width:11px;height:11px;border-radius:50%;background:#f6f6f6;border:1px solid #cfcfcf"></div>
<div class="a" style="left:683px;top:220px;width:5px;height:5px;border-radius:50%;background:#c8c8c8"></div>
<div class="pt" style="left:697px;top:216.5px;color:#c0c0c0">Lado 1</div>
<div class="a" style="left:680px;top:233px;width:11px;height:11px;border-radius:50%;background:#fafafa;border:1px solid #d6d6d6"></div>
<div class="pt" style="left:697px;top:232.5px;color:#c0c0c0">Lado 2</div>
<div class="pt" style="left:679px;top:254px;color:#444">Tipo</div>
<div class="a" style="left:705px;top:250px;width:108px;height:20px;background:#f6f6f6;border:1px solid #c4c4c4"></div>
<div class="a" style="left:799px;top:251px;width:1px;height:18px;background:#cfcfcf"></div>
<div class="tri" style="left:802px;top:258px"></div>
<div class="pt" style="left:711px;top:254px;color:#333">Oblongo</div>
<div class="a" style="left:679px;top:278px;width:161px;height:1px;background:#cfcfcf"></div>
<svg class="a" style="left:668px;top:279px" width="172" height="152" viewBox="668 279 172 152">
  <rect x="696.5" y="297.5" width="84" height="59" fill="#e3e3e3" stroke="#c4c4c4"/>
  <path d="M714.5 297 V329 A24.5 20 0 0 0 763.5 329 V297 Z" fill="#fdfdfd"/>
  <path d="M699 297.5 H714.5 V329 A24.5 20 0 0 0 763.5 329 V297.5 H778" fill="none" stroke="#1f4a8c" stroke-width="2"/>
  <path d="M779 297.5 H816 M747.5 349.5 H816" stroke="#222" stroke-width="1"/>
  <path d="M811.5 300 V347" stroke="#222" stroke-width="1"/>
  <path d="M811.5 298 l-3 5 h6z M811.5 349 l-3 -5 h6z" fill="#222"/>
  <path d="M714.5 331 V374 M763.5 331 V374" stroke="#222" stroke-width="1"/>
  <path d="M716 370 H762 M763.5 370 H788" stroke="#222" stroke-width="1"/>
  <path d="M715 370 l5 -3 v6z M763 370 l-5 -3 v6z" fill="#222"/>
</svg>
<div class="a" style="left:791px;top:303.5px;width:55px;height:20px;background:#f8f8f8;border:1px solid #cfcfcf"></div>
<div class="a" style="left:791px;top:322.5px;width:55px;height:20px;background:#f8f8f8;border:1px solid #cfcfcf"></div>
<div class="pt" style="left:798px;top:308px;color:#444">Cego</div>
<div class="pt" style="left:794px;top:327px;color:#444">[2.0 * espessura]</div>
<div class="a" style="left:791px;top:361px;width:55px;height:19px;background:#fafafa;border:1px solid #cfcfcf;overflow:hidden"><div class="pt" style="left:2px;top:3px;color:#555">[Espessura]</div></div>
<div class="a" style="left:834px;top:379px;width:10px;height:50px;background:#fdfefe;border:1px solid #dde6ea"></div>
<svg class="a" style="left:833px;top:362px" width="7" height="17" viewBox="0 0 7 17"><path d="M1 1.5h4M1 15.5h4M3 1.5v14" stroke="#111" stroke-width="1.1"/></svg>

</body></html>
